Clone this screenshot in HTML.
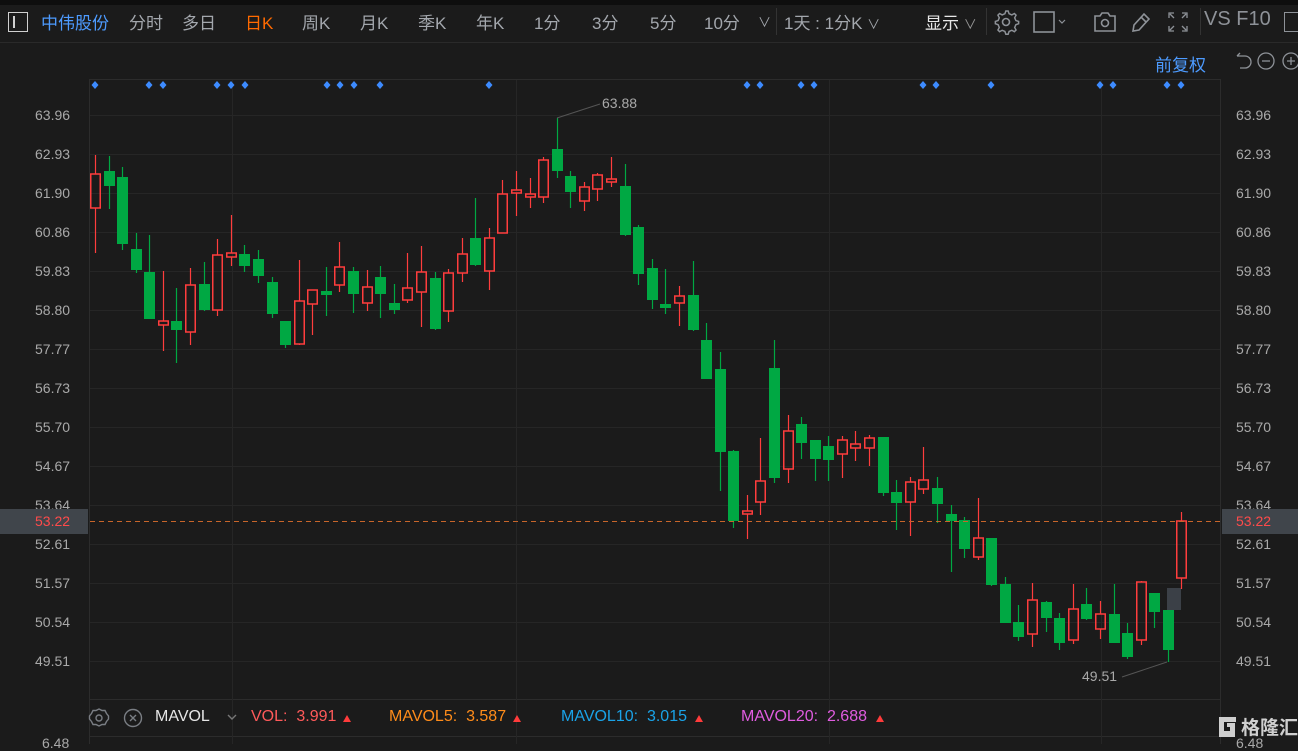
<!DOCTYPE html>
<html><head><meta charset="utf-8">
<style>
*{margin:0;padding:0;box-sizing:border-box}
body{width:1298px;height:744px;background:#1b1b1b;overflow:hidden;font-family:"Liberation Sans","Noto Sans CJK SC",sans-serif;position:relative}
.t{position:absolute;white-space:nowrap}
.tb{color:#a3a7ad;font-size:17px;top:9px}
.pl{position:absolute;font-size:14px;color:#a9a9a9;font-family:"Liberation Sans",sans-serif}
</style></head><body>
<div style="position:absolute;left:0;top:0;width:1298px;height:5px;background:#0e0e0e"></div>
<div style="position:absolute;left:0;top:42px;width:1298px;height:1px;background:#2a2a2a"></div>
<div style="position:absolute;left:8px;top:12px;width:20px;height:20px;border:1.5px solid #d0d0d0"></div>
<div style="position:absolute;left:13px;top:16px;width:1.5px;height:12px;background:#d0d0d0"></div>
<div class="t tb" style="left:41px;color:#4d9bff">中伟股份</div>
<div class="t tb" style="left:129px">分时</div>
<div class="t tb" style="left:182px">多日</div>
<div class="t tb" style="left:245px;color:#ff6a00">日K</div>
<div class="t tb" style="left:302px">周K</div>
<div class="t tb" style="left:360px">月K</div>
<div class="t tb" style="left:418px">季K</div>
<div class="t tb" style="left:476px">年K</div>
<div class="t tb" style="left:534px">1分</div>
<div class="t tb" style="left:592px">3分</div>
<div class="t tb" style="left:650px">5分</div>
<div class="t tb" style="left:704px">10分</div>
<div class="t tb" style="left:758px;font-size:13px;top:12px">∨</div>
<div style="position:absolute;left:776px;top:8px;width:1px;height:27px;background:#333"></div>
<div class="t tb" style="left:784px">1天 : 1分K <span style="font-size:13px">∨</span></div>
<div class="t tb" style="left:925px;color:#e8e8e8">显示 <span style="font-size:13px;color:#999">∨</span></div>
<div style="position:absolute;left:986px;top:8px;width:1px;height:27px;background:#333"></div>
<svg style="position:absolute;left:0;top:0" width="1298" height="80">
<g fill="none" stroke="#8e9298" stroke-width="1.6">
<circle cx="1006" cy="22" r="3.5"/>
<path d="M1006 12 l2.5 0 l1 3 l3 1.3 l2.8 -1.5 l1.8 1.8 l-1.5 2.8 l1.3 3 l3 1 v2.5 l-3 1 l-1.3 3 l1.5 2.8 l-1.8 1.8 l-2.8 -1.5 l-3 1.3 l-1 3 h-2.5 l-1 -3 l-3 -1.3 l-2.8 1.5 l-1.8 -1.8 l1.5 -2.8 l-1.3 -3 l-3 -1 v-2.5 l3 -1 l1.3 -3 l-1.5 -2.8 l1.8 -1.8 l2.8 1.5 l3 -1.3 l1 -3z" transform="translate(1.2,-1) scale(.92) translate(86,1)"/>
<rect x="1034" y="12" width="20" height="20"/>
<path d="M1059 20 l3 3 l3 -3" stroke-width="1.2"/>
<path d="M1095 16 h5 l2 -3 h6 l2 3 h5 v15 h-20z"/><circle cx="1105" cy="23" r="3.5"/>
<path d="M1133 31 l1 -6 l10 -11 l5 5 l-10 11z M1141 17 l5 5"/>
<path d="M1169 18 v-5 h5 M1182 13 h5 v5 M1187 26 v5 h-5 M1174 31 h-5 v-5 M1170 14 l4 4 M1186 14 l-4 4 M1186 30 l-4 -4 M1170 30 l4 -4" stroke-width="1.3"/>
<path d="M1237 56 h8 a6 6 0 0 1 0 12 h-5 M1237 56 l3 -3" stroke-width="1.3"/>
<circle cx="1266" cy="61" r="8" stroke-width="1.3"/><path d="M1262 61 h8" stroke-width="1.3"/>
<circle cx="1291" cy="61" r="8" stroke-width="1.3"/><path d="M1287 61 h8 M1291 57 v8" stroke-width="1.3"/>
</g>
</svg>
<div style="position:absolute;left:1200px;top:8px;width:1px;height:27px;background:#333"></div>
<div class="t tb" style="left:1204px;font-size:20px;top:8px;color:#8e9298">VS F10</div>
<div style="position:absolute;left:1284px;top:12px;width:20px;height:20px;border:1.5px solid #8e9298"></div>
<div class="t" style="left:1155px;top:51px;font-size:17px;color:#4d9bff">前复权</div>

<svg id="ch" style="position:absolute;left:0;top:0" width="1298" height="744"></svg>

<div class="pl" style="left:35px;top:107px">63.96</div>
<div class="pl" style="left:35px;top:146px">62.93</div>
<div class="pl" style="left:35px;top:185px">61.90</div>
<div class="pl" style="left:35px;top:224px">60.86</div>
<div class="pl" style="left:35px;top:263px">59.83</div>
<div class="pl" style="left:35px;top:302px">58.80</div>
<div class="pl" style="left:35px;top:341px">57.77</div>
<div class="pl" style="left:35px;top:380px">56.73</div>
<div class="pl" style="left:35px;top:419px">55.70</div>
<div class="pl" style="left:35px;top:458px">54.67</div>
<div class="pl" style="left:35px;top:497px">53.64</div>
<div class="pl" style="left:35px;top:536px">52.61</div>
<div class="pl" style="left:35px;top:575px">51.57</div>
<div class="pl" style="left:35px;top:614px">50.54</div>
<div class="pl" style="left:35px;top:653px">49.51</div>
<div class="pl" style="left:1236px;top:107px">63.96</div>
<div class="pl" style="left:1236px;top:146px">62.93</div>
<div class="pl" style="left:1236px;top:185px">61.90</div>
<div class="pl" style="left:1236px;top:224px">60.86</div>
<div class="pl" style="left:1236px;top:263px">59.83</div>
<div class="pl" style="left:1236px;top:302px">58.80</div>
<div class="pl" style="left:1236px;top:341px">57.77</div>
<div class="pl" style="left:1236px;top:380px">56.73</div>
<div class="pl" style="left:1236px;top:419px">55.70</div>
<div class="pl" style="left:1236px;top:458px">54.67</div>
<div class="pl" style="left:1236px;top:497px">53.64</div>
<div class="pl" style="left:1236px;top:536px">52.61</div>
<div class="pl" style="left:1236px;top:575px">51.57</div>
<div class="pl" style="left:1236px;top:614px">50.54</div>
<div class="pl" style="left:1236px;top:653px">49.51</div>
<div style="position:absolute;left:0;top:509px;width:88px;height:25px;background:#40454b"></div>
<div style="position:absolute;left:1222px;top:509px;width:76px;height:25px;background:#40454b"></div>
<div class="pl" style="left:35px;top:513px;color:#ff4b4b">53.22</div>
<div class="pl" style="left:1236px;top:513px;color:#ff4b4b">53.22</div>
<div class="pl" style="left:602px;top:95px">63.88</div>
<div class="pl" style="left:1082px;top:668px">49.51</div>
<div class="pl" style="left:42px;top:735px">6.48</div>
<div class="pl" style="left:1236px;top:735px">6.48</div>

<svg style="position:absolute;left:0;top:700px" width="1298" height="36">
<g fill="none" stroke="#7a7e84" stroke-width="1.4">
<circle cx="99" cy="18" r="3"/><path d="M99 9 l3 1.5 l3 0 l1.5 3 l2 2.5 v3 l-2 2.5 l-1.5 3 l-3 0 l-3 1.5 l-3 -1.5 l-3 0 l-1.5 -3 l-2 -2.5 v-3 l2 -2.5 l1.5 -3 l3 0z"/>
<circle cx="133" cy="18" r="8.5"/><path d="M130 15 l6 6 M136 15 l-6 6"/>
<path d="M228 15 l4 4 l4 -4" stroke="#777"/>
</g>
<g fill="#ff3b3b"><path d="M343 22 l4 -7 l4 7z"/></g>
<g fill="#ff3b3b"><path d="M513 22 l4 -7 l4 7z"/><path d="M695 22 l4 -7 l4 7z"/><path d="M876 22 l4 -7 l4 7z"/></g>
</svg>
<div class="t" style="left:155px;top:708px;font-size:16px;color:#e6e6e6">MAVOL</div>
<div class="t" style="left:251px;top:708px;font-size:16px;color:#ff5a5a">VOL:&nbsp; 3.991</div>
<div class="t" style="left:389px;top:708px;font-size:16px;color:#ff8c1a">MAVOL5:&nbsp; 3.587</div>
<div class="t" style="left:561px;top:708px;font-size:16px;color:#1aa3e8">MAVOL10:&nbsp; 3.015</div>
<div class="t" style="left:741px;top:708px;font-size:16px;color:#e05ce0">MAVOL20:&nbsp; 2.688</div>
<svg style="position:absolute;left:1217px;top:715px" width="22" height="22"><path d="M2 2 h17 v5 h-12 v9 h6 v-4 h-3 v-4 h8 v14 h-16z" fill="#cfcfcf"/></svg>
<div class="t" style="left:1241px;top:713px;font-size:19px;color:#cfcfcf;font-weight:bold">格隆汇</div>

<script>
var s=document.getElementById('ch'),h='';
function L(x1,y1,x2,y2,c,w,d){h+='<line x1="'+x1+'" y1="'+y1+'" x2="'+x2+'" y2="'+y2+'" stroke="'+c+'" stroke-width="'+(w||1)+'"'+(d?' stroke-dasharray="'+d+'"':'')+'/>';}
for(var i=0;i<15;i++){var y=115+i*39;L(90,y+.5,1220,y+.5,'#262626');}
[232,516,829,1101].forEach(function(x){L(x+.5,80,x+.5,699,'#262626');});
L(89.5,80,89.5,744,'#2c2c2c');L(1220.5,80,1220.5,744,'#2c2c2c');
L(89,79.5,1221,79.5,'#2c2c2c');L(89,699.5,1221,699.5,'#2c2c2c');L(89,736.5,1221,736.5,'#2c2c2c');
[232,516,829,1101].forEach(function(x){L(x+.5,699,x+.5,744,'#262626');});
[95,149,163,217,231,245,327,340,354,380,489,747,760,801,814,923,936,991,1100,1113,1167,1181].forEach(function(x){h+='<path d="M'+x+' 81 l3.5 4 l-3.5 4 l-3.5 -4z" fill="#3d8bff"/>';});
var d=[
[155,174,208,253,'r'],[156,171,186,209,'g'],[167,177,244,250,'g'],[233,249,270,273,'g'],[235,272,319,319,'g'],
[271,321,325,351,'r'],[288,321,330,363,'g'],[268,285,332,345,'r'],[262,284,310,311,'g'],[239,255,310,316,'r'],
[215,253,257,266,'r'],[245,254,266,272,'g'],[250,259,276,283,'g'],[277,282,314,318,'g'],[321,321,345,348,'g'],
[260,301,344,345,'r'],[290,290,304,335,'r'],[267,291,295,316,'g'],[242,267,285,292,'r'],[267,271,294,313,'g'],
[270,287,303,311,'r'],[266,277,294,318,'g'],[284,303,310,314,'g'],[253,288,300,303,'r'],[246,272,292,327,'r'],
[272,278,329,330,'g'],[269,273,311,322,'r'],[238,254,273,282,'r'],[198,238,265,266,'g'],[228,238,271,290,'r'],
[180,194,233,233,'r'],[171,190,193,216,'r'],[178,194,197,208,'r'],[157,160,197,203,'r'],[118,149,171,178,'g'],
[171,176,192,208,'g'],[182,187,201,211,'r'],[173,175,189,201,'r'],[157,179,182,187,'r'],[164,186,235,236,'g'],
[225,227,274,285,'g'],[259,268,300,309,'g'],[269,304,308,314,'g'],[286,296,303,326,'r'],[261,295,330,331,'g'],
[323,340,379,379,'g'],[352,369,452,491,'g'],[450,451,521,528,'g'],[495,511,514,539,'r'],[438,481,502,515,'r'],
[340,368,478,483,'g'],[415,431,469,483,'r'],[417,424,443,459,'g'],[440,440,459,481,'g'],[436,446,460,481,'g'],
[436,440,454,478,'r'],[431,444,448,461,'r'],[435,438,448,466,'r'],[437,437,493,496,'g'],[480,492,503,530,'g'],
[477,482,502,536,'r'],[447,480,489,494,'r'],[477,488,504,523,'g'],[505,514,521,572,'g'],[517,520,549,558,'g'],
[498,538,557,560,'r'],[538,538,585,586,'g'],[577,584,623,623,'g'],[605,622,637,641,'g'],[583,600,634,647,'r'],
[601,602,618,632,'g'],[613,618,643,650,'g'],[584,609,640,644,'r'],[588,604,619,620,'g'],[601,614,629,639,'r'],
[584,614,643,643,'g'],[623,633,657,659,'g'],[581,582,640,645,'r'],[593,593,612,628,'g'],[610,610,650,662,'g'],
[512,521,578,589,'r']];
h+='<rect x="1167" y="588" width="14" height="22" fill="#3b4047"/>';
d.forEach(function(c,i){var x=Math.round(95+13.58*i)+.5;
 if(c[4]=='g'){var col='#00a843';L(x,c[0],x,c[3],col,1.2);h+='<rect x="'+(x-5.5)+'" y="'+c[1]+'" width="11" height="'+Math.max(2,c[2]-c[1])+'" fill="'+col+'"/>';}
 else{var col='#ff3d3d';L(x,c[0],x,c[1],col,1.2);L(x,c[2],x,c[3],col,1.2);h+='<rect x="'+(x-4.75)+'" y="'+c[1]+'" width="9.5" height="'+Math.max(2,c[2]-c[1])+'" fill="none" stroke="'+col+'" stroke-width="1.5"/>';}
});
L(90,521.5,1220,521.5,'#c8652a',1,'5,4');
L(557,118,600,104,'#555');L(1167,662,1122,677,'#555');
s.innerHTML=h;
</script>
</body></html>
